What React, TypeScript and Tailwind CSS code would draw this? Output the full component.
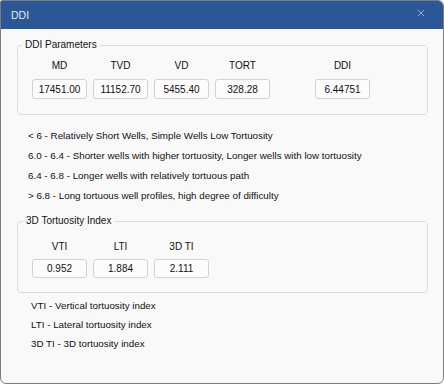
import { X } from "lucide-react";

const ddiParams = [
  { label: "MD", value: "17451.00" },
  { label: "TVD", value: "11152.70" },
  { label: "VD", value: "5455.40" },
  { label: "TORT", value: "328.28" },
];

const ranges = [
  "< 6 - Relatively Short Wells, Simple Wells Low Tortuosity",
  "6.0 - 6.4 - Shorter wells with higher tortuosity, Longer wells with low tortuosity",
  "6.4 - 6.8 - Longer wells with relatively tortuous path",
  "> 6.8 - Long tortuous well profiles, high degree of difficulty",
];

const tortuosity = [
  { label: "VTI", value: "0.952" },
  { label: "LTI", value: "1.884" },
  { label: "3D TI", value: "2.111" },
];

const legend = [
  "VTI - Vertical tortuosity index",
  "LTI - Lateral tortuosity index",
  "3D TI - 3D tortuosity index",
];

function Field({
  label,
  value,
  boxHeight,
  gap,
}: {
  label: string;
  value: string;
  boxHeight: string;
  gap: string;
}) {
  return (
    <div className="flex w-[55px] flex-col items-center">
      <span className="h-[14px] leading-[14px]">{label}</span>
      <div
        className={`flex w-full items-center justify-center rounded-[3px] border border-[#d2d2d2] bg-[#fcfcfc] ${gap} ${boxHeight}`}
      >
        {value}
      </div>
    </div>
  );
}

export default function App() {
  return (
    <div className="h-[384px] w-[444px] overflow-hidden rounded-[6px] rounded-tl-[2px] border border-[#7d7d7d] bg-[#f9f9f9] font-['Liberation_Sans',Arial,sans-serif] text-[10px] text-[#111]">
      <div className="flex h-[28px] items-center justify-between bg-[#2b5797] pl-[10px] pr-[16px] pt-[2px]">
        <span className="text-[10.5px] text-[#e4e9f2]">DDI</span>
        <X size={12} strokeWidth={1.4} className="mb-[6px] text-[#c5d0e3]" />
      </div>

      <div className="pl-[16px] pr-[15px]">
        <fieldset className="mt-[9px] rounded-[4px] border border-[#dcdcdc]">
          <legend className="ml-[4px] px-[3px] leading-[14px]">DDI Parameters</legend>
          <div className="flex pb-[15px] pl-[14px] pt-[7px]">
            <div className="flex gap-[6px]">
              {ddiParams.map((p) => (
                <Field key={p.label} label={p.label} value={p.value} boxHeight="h-[20px]" gap="mt-[6px]" />
              ))}
            </div>
            <div className="ml-[45px]">
              <Field label="DDI" value="6.44751" boxHeight="h-[20px]" gap="mt-[6px]" />
            </div>
          </div>
        </fieldset>

        <div className="mt-[11px] pl-[11px] text-[9.8px]">
          {ranges.map((r) => (
            <p key={r} className="leading-[20px]">
              {r}
            </p>
          ))}
        </div>

        <fieldset className="mt-[8px] rounded-[4px] border border-[#dcdcdc]">
          <legend className="ml-[5px] px-[3px] leading-[14px]">3D Tortuosity Index</legend>
          <div className="flex gap-[6px] pb-[14px] pl-[14px] pt-[12px]">
            {tortuosity.map((t) => (
              <Field key={t.label} label={t.label} value={t.value} boxHeight="h-[19px]" gap="mt-[5px]" />
            ))}
          </div>
        </fieldset>

        <div className="mt-[3px] pl-[14px] text-[9.8px]">
          {legend.map((l) => (
            <p key={l} className="leading-[19px]">
              {l}
            </p>
          ))}
        </div>
      </div>
    </div>
  );
}
